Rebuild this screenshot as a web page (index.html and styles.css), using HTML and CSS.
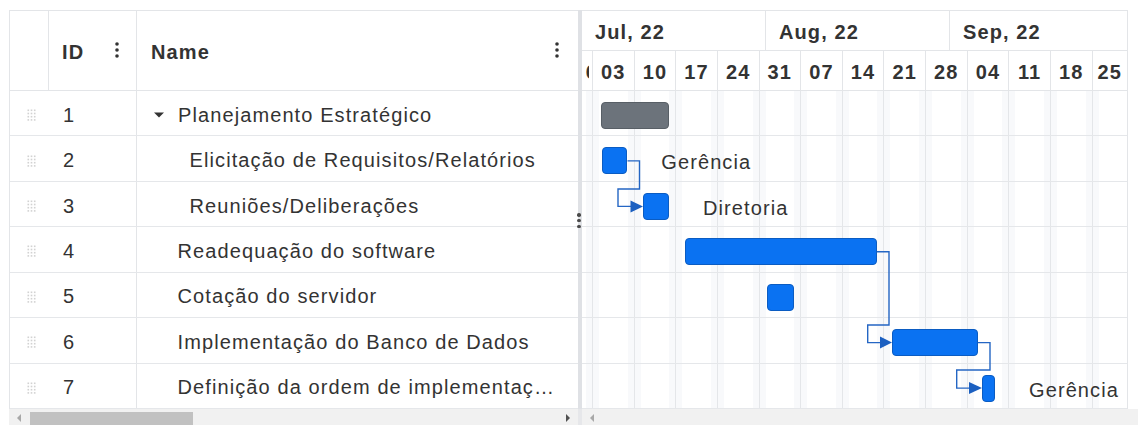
FILE: index.html
```html
<!DOCTYPE html>
<html lang="pt">
<head>
<meta charset="utf-8">
<title>Cronograma do Projeto</title>
<link rel="stylesheet" href="styles.css">
</head>
<body>
<div class="gantt">
  <div class="panes">
    <div class="grid-pane">
      <div class="grid-head">
        <div class="hcell drag"></div>
        <div class="hcell id"><span>ID</span>
          <svg class="kebab" width="4" height="16" viewBox="0 0 4 16"><circle cx="2" cy="2" r="1.8"/><circle cx="2" cy="8" r="1.8"/><circle cx="2" cy="14" r="1.8"/></svg>
        </div>
        <div class="hcell name"><span>Name</span>
          <svg class="kebab" width="4" height="16" viewBox="0 0 4 16"><circle cx="2" cy="2" r="1.8"/><circle cx="2" cy="8" r="1.8"/><circle cx="2" cy="14" r="1.8"/></svg>
        </div>
      </div>

      <div class="grid-row">
        <div class="idcell"><svg class="handle" width="9" height="12" viewBox="0 0 9 12"><g><rect x="0.5" y="0.5" width="1.6" height="1.6"/><rect x="3.7" y="0.5" width="1.6" height="1.6"/><rect x="6.9" y="0.5" width="1.6" height="1.6"/><rect x="0.5" y="3.7" width="1.6" height="1.6"/><rect x="3.7" y="3.7" width="1.6" height="1.6"/><rect x="6.9" y="3.7" width="1.6" height="1.6"/><rect x="0.5" y="6.9" width="1.6" height="1.6"/><rect x="3.7" y="6.9" width="1.6" height="1.6"/><rect x="6.9" y="6.9" width="1.6" height="1.6"/><rect x="0.5" y="10.1" width="1.6" height="1.6"/><rect x="3.7" y="10.1" width="1.6" height="1.6"/><rect x="6.9" y="10.1" width="1.6" height="1.6"/></g></svg><span class="num">1</span></div>
        <div class="namecell parent"><svg class="caret" width="10" height="6" viewBox="0 0 10 6"><path d="M0 0.5H10L5 5.5Z"/></svg><span class="label">Planejamento Estratégico</span></div>
      </div>
      <div class="grid-row">
        <div class="idcell"><svg class="handle" width="9" height="12" viewBox="0 0 9 12"><g><rect x="0.5" y="0.5" width="1.6" height="1.6"/><rect x="3.7" y="0.5" width="1.6" height="1.6"/><rect x="6.9" y="0.5" width="1.6" height="1.6"/><rect x="0.5" y="3.7" width="1.6" height="1.6"/><rect x="3.7" y="3.7" width="1.6" height="1.6"/><rect x="6.9" y="3.7" width="1.6" height="1.6"/><rect x="0.5" y="6.9" width="1.6" height="1.6"/><rect x="3.7" y="6.9" width="1.6" height="1.6"/><rect x="6.9" y="6.9" width="1.6" height="1.6"/><rect x="0.5" y="10.1" width="1.6" height="1.6"/><rect x="3.7" y="10.1" width="1.6" height="1.6"/><rect x="6.9" y="10.1" width="1.6" height="1.6"/></g></svg><span class="num">2</span></div>
        <div class="namecell child"><span class="label">Elicitação de Requisitos/Relatórios</span></div>
      </div>
      <div class="grid-row">
        <div class="idcell"><svg class="handle" width="9" height="12" viewBox="0 0 9 12"><g><rect x="0.5" y="0.5" width="1.6" height="1.6"/><rect x="3.7" y="0.5" width="1.6" height="1.6"/><rect x="6.9" y="0.5" width="1.6" height="1.6"/><rect x="0.5" y="3.7" width="1.6" height="1.6"/><rect x="3.7" y="3.7" width="1.6" height="1.6"/><rect x="6.9" y="3.7" width="1.6" height="1.6"/><rect x="0.5" y="6.9" width="1.6" height="1.6"/><rect x="3.7" y="6.9" width="1.6" height="1.6"/><rect x="6.9" y="6.9" width="1.6" height="1.6"/><rect x="0.5" y="10.1" width="1.6" height="1.6"/><rect x="3.7" y="10.1" width="1.6" height="1.6"/><rect x="6.9" y="10.1" width="1.6" height="1.6"/></g></svg><span class="num">3</span></div>
        <div class="namecell child"><span class="label">Reuniões/Deliberações</span></div>
      </div>
      <div class="grid-row">
        <div class="idcell"><svg class="handle" width="9" height="12" viewBox="0 0 9 12"><g><rect x="0.5" y="0.5" width="1.6" height="1.6"/><rect x="3.7" y="0.5" width="1.6" height="1.6"/><rect x="6.9" y="0.5" width="1.6" height="1.6"/><rect x="0.5" y="3.7" width="1.6" height="1.6"/><rect x="3.7" y="3.7" width="1.6" height="1.6"/><rect x="6.9" y="3.7" width="1.6" height="1.6"/><rect x="0.5" y="6.9" width="1.6" height="1.6"/><rect x="3.7" y="6.9" width="1.6" height="1.6"/><rect x="6.9" y="6.9" width="1.6" height="1.6"/><rect x="0.5" y="10.1" width="1.6" height="1.6"/><rect x="3.7" y="10.1" width="1.6" height="1.6"/><rect x="6.9" y="10.1" width="1.6" height="1.6"/></g></svg><span class="num">4</span></div>
        <div class="namecell"><span class="label">Readequação do software</span></div>
      </div>
      <div class="grid-row">
        <div class="idcell"><svg class="handle" width="9" height="12" viewBox="0 0 9 12"><g><rect x="0.5" y="0.5" width="1.6" height="1.6"/><rect x="3.7" y="0.5" width="1.6" height="1.6"/><rect x="6.9" y="0.5" width="1.6" height="1.6"/><rect x="0.5" y="3.7" width="1.6" height="1.6"/><rect x="3.7" y="3.7" width="1.6" height="1.6"/><rect x="6.9" y="3.7" width="1.6" height="1.6"/><rect x="0.5" y="6.9" width="1.6" height="1.6"/><rect x="3.7" y="6.9" width="1.6" height="1.6"/><rect x="6.9" y="6.9" width="1.6" height="1.6"/><rect x="0.5" y="10.1" width="1.6" height="1.6"/><rect x="3.7" y="10.1" width="1.6" height="1.6"/><rect x="6.9" y="10.1" width="1.6" height="1.6"/></g></svg><span class="num">5</span></div>
        <div class="namecell"><span class="label">Cotação do servidor</span></div>
      </div>
      <div class="grid-row">
        <div class="idcell"><svg class="handle" width="9" height="12" viewBox="0 0 9 12"><g><rect x="0.5" y="0.5" width="1.6" height="1.6"/><rect x="3.7" y="0.5" width="1.6" height="1.6"/><rect x="6.9" y="0.5" width="1.6" height="1.6"/><rect x="0.5" y="3.7" width="1.6" height="1.6"/><rect x="3.7" y="3.7" width="1.6" height="1.6"/><rect x="6.9" y="3.7" width="1.6" height="1.6"/><rect x="0.5" y="6.9" width="1.6" height="1.6"/><rect x="3.7" y="6.9" width="1.6" height="1.6"/><rect x="6.9" y="6.9" width="1.6" height="1.6"/><rect x="0.5" y="10.1" width="1.6" height="1.6"/><rect x="3.7" y="10.1" width="1.6" height="1.6"/><rect x="6.9" y="10.1" width="1.6" height="1.6"/></g></svg><span class="num">6</span></div>
        <div class="namecell"><span class="label">Implementação do Banco de Dados</span></div>
      </div>
      <div class="grid-row">
        <div class="idcell"><svg class="handle" width="9" height="12" viewBox="0 0 9 12"><g><rect x="0.5" y="0.5" width="1.6" height="1.6"/><rect x="3.7" y="0.5" width="1.6" height="1.6"/><rect x="6.9" y="0.5" width="1.6" height="1.6"/><rect x="0.5" y="3.7" width="1.6" height="1.6"/><rect x="3.7" y="3.7" width="1.6" height="1.6"/><rect x="6.9" y="3.7" width="1.6" height="1.6"/><rect x="0.5" y="6.9" width="1.6" height="1.6"/><rect x="3.7" y="6.9" width="1.6" height="1.6"/><rect x="6.9" y="6.9" width="1.6" height="1.6"/><rect x="0.5" y="10.1" width="1.6" height="1.6"/><rect x="3.7" y="10.1" width="1.6" height="1.6"/><rect x="6.9" y="10.1" width="1.6" height="1.6"/></g></svg><span class="num">7</span></div>
        <div class="namecell"><span class="label">Definição da ordem de implementação</span></div>
      </div>
    </div>

    <div class="splitter"><span class="grip"><i></i><i></i><i></i></span></div>

    <div class="chart-pane">
      <div class="months">
        <div class="month jul">Jul, 22</div>
        <div class="month aug">Aug, 22</div>
        <div class="month sep">Sep, 22</div>
      </div>
      <div class="weeks">
        <div class="week first"><span>26</span></div>
        <div class="week">03</div>
        <div class="week">10</div>
        <div class="week">17</div>
        <div class="week">24</div>
        <div class="week">31</div>
        <div class="week">07</div>
        <div class="week">14</div>
        <div class="week">21</div>
        <div class="week">28</div>
        <div class="week">04</div>
        <div class="week">11</div>
        <div class="week">18</div>
        <div class="week last">25</div>
      </div>
      <div class="chart-body">
        <div class="bar-row"><div class="bar summary" style="left:19px;width:68px"></div></div>
        <div class="bar-row"><div class="bar" style="left:19.7px;width:25.6px"><span class="bar-label">Gerência</span></div></div>
        <div class="bar-row"><div class="bar" style="left:61px;width:26px"><span class="bar-label">Diretoria</span></div></div>
        <div class="bar-row"><div class="bar" style="left:102.7px;width:192px"></div></div>
        <div class="bar-row"><div class="bar" style="left:185.3px;width:26.4px"></div></div>
        <div class="bar-row"><div class="bar" style="left:310px;width:85.7px"></div></div>
        <div class="bar-row"><div class="bar" style="left:400px;width:13px"><span class="bar-label">Gerência</span></div></div>

        <svg class="links" width="545" height="318" viewBox="0 0 545 318">
          <g fill="none" stroke="#2466c4" stroke-width="1.4">
            <path d="M45.5 69.9H57.5V98H36V115.4H50"/>
            <path d="M294.7 160.8H307V234H285.7V251.6H299"/>
            <path d="M395.7 251.6H408V279H374.7V297.1H388"/>
          </g>
          <g fill="#1b5fc0">
            <path d="M48.5 109.4L61 115.4L48.5 121.4Z"/>
            <path d="M298 245.6L310 251.6L298 257.6Z"/>
            <path d="M387 291.1L400 297.1L387 303.1Z"/>
          </g>
        </svg>
      </div>
    </div>
    <div class="gutter"></div>
  </div>

  <div class="scrollbars">
    <div class="hscroll grid-scroll">
      <span class="arrow left"></span>
      <span class="thumb"></span>
      <span class="arrow right active"></span>
    </div>
    <div class="scroll-split"></div>
    <div class="hscroll chart-scroll">
      <span class="arrow left"></span>
    </div>
  </div>
</div>
</body>
</html>
```

FILE: styles.css
```css
* {
  box-sizing: border-box;
}

body {
  margin: 0;
  background: #ffffff;
  font-family: "Liberation Sans", Arial, Helvetica, sans-serif;
  font-size: 20px;
  letter-spacing: 1.1px;
  color: #333333;
}

.gantt {
  margin: 10px 0 0 9px;
  width: 1129px;
}

.panes {
  display: flex;
  height: 399px;
}

/* ---------- task grid ---------- */

.grid-pane {
  flex: none;
  width: 569px;
  border-left: 1px solid #e3e5e8;
  border-top: 1px solid #e3e5e8;
}

.grid-head {
  display: flex;
  height: 80px;
  border-bottom: 1px solid #e3e5e8;
}

.hcell {
  display: flex;
  align-items: center;
  padding-top: 3px;
  font-weight: 700;
  border-right: 1px solid #e3e5e8;
}

.hcell.drag {
  width: 39px;
}

.hcell.id {
  width: 88px;
  padding-left: 13px;
  padding-right: 17px;
  justify-content: space-between;
}

.hcell.name {
  flex: 1;
  border-right: none;
  padding-left: 14px;
  padding-right: 19px;
  justify-content: space-between;
}

.kebab {
  fill: #333333;
  margin-top: -5px;
}

.grid-row {
  display: flex;
  height: 45.43px;
  padding-top: 4px;
  border-bottom: 1px solid #e5e7ea;
}

.idcell {
  flex: none;
  width: 127px;
  display: flex;
  align-items: center;
  padding-left: 17px;
  border-right: 1px solid #e3e5e8;
  margin-top: -4px;
  padding-top: 4px;
}

.handle {
  fill: #d2d2d2;
}

.num {
  margin-left: 27px;
}

.namecell {
  flex: 1;
  min-width: 0;
  display: flex;
  align-items: center;
  padding: 0 20px 0 40.5px;
  white-space: nowrap;
}

.namecell.parent {
  padding-left: 17px;
}

.namecell.child {
  padding-left: 52.5px;
}

.caret {
  flex: none;
  fill: #333333;
  margin-right: 14px;
}

.label {
  overflow: hidden;
  text-overflow: ellipsis;
}

/* ---------- splitter ---------- */

.splitter {
  flex: none;
  width: 4px;
  background: #dfe1e5;
  position: relative;
}

.grip {
  position: absolute;
  left: -1px;
  top: 203px;
  display: flex;
  flex-direction: column;
  gap: 2.2px;
}

.grip i {
  display: block;
  width: 3.6px;
  height: 3.6px;
  border-radius: 50%;
  background: #4a4a4a;
}

/* ---------- timeline ---------- */

.chart-pane {
  flex: none;
  width: 546px;
  border-top: 1px solid #e3e5e8;
  border-right: 1px solid #e3e5e8;
  overflow: hidden;
}

.months,
.weeks {
  display: flex;
  height: 40px;
  border-bottom: 1px solid #e3e5e8;
  font-weight: 700;
}

.month {
  flex: none;
  display: flex;
  align-items: center;
  padding: 3px 0 0 13px;
  border-right: 1px solid #e3e5e8;
}

.month.jul,
.month.aug {
  width: 184px;
}

.month.sep {
  flex: 1;
  border-right: none;
}

.week {
  flex: none;
  width: 41.63px;
  display: flex;
  align-items: center;
  justify-content: center;
  padding-top: 3px;
  overflow: hidden;
  border-right: 1px solid #e3e5e8;
  white-space: nowrap;
}

/* only a sliver of the previous week is in view */
.week.first {
  width: 11px;
  justify-content: flex-start;
}

.week.first span {
  display: block;
  width: 4px;
  margin-left: 3px;
  overflow: hidden;
  text-indent: -11.6px;
}

.week.last {
  flex: 1;
  border-right: none;
}

.chart-body {
  position: relative;
  height: 318px;
  background: repeating-linear-gradient(90deg,
    #ffffff 0 4px,
    #f8f9fb 4px 10px,
    #e4e6e9 10px 11px,
    #f8f9fb 11px 17px,
    #ffffff 17px 41.63px);
}

.bar-row {
  position: relative;
  height: 45.43px;
  border-bottom: 1px solid #e5e7ea;
}

.bar {
  position: absolute;
  top: 11px;
  height: 27px;
  background: #0a72f2;
  border: 1px solid #0b5cc2;
  border-radius: 4px;
}

.bar.summary {
  background: #6c737b;
  border-color: #585f66;
}

.bar-label {
  position: absolute;
  left: calc(100% + 35px);
  top: 1px;
  line-height: 27px;
  white-space: nowrap;
}

.links {
  position: absolute;
  left: 0;
  top: 0;
  pointer-events: none;
}

.gutter {
  flex: 1;
}

/* ---------- scrollbars ---------- */

.scrollbars {
  display: flex;
  height: 16px;
  background: #f1f1f1;
}

.hscroll {
  position: relative;
  display: flex;
  align-items: flex-end;
}

.grid-scroll {
  width: 569px;
  padding-left: 8px;
}

.scroll-split {
  width: 4px;
  background: #e6e7ea;
}

.chart-scroll {
  flex: 1;
  padding-left: 8px;
}

.arrow {
  width: 0;
  height: 0;
  margin-bottom: 3px;
  border-top: 4px solid transparent;
  border-bottom: 4px solid transparent;
}

.arrow.left {
  border-right: 4px solid #a8a8a8;
}

.arrow.right {
  border-left: 4px solid #a8a8a8;
  margin-left: 373px;
}

.arrow.right.active {
  border-left-color: #505050;
}

.thumb {
  width: 163px;
  height: 13px;
  margin-left: 9px;
  background: #c1c1c1;
}
```
